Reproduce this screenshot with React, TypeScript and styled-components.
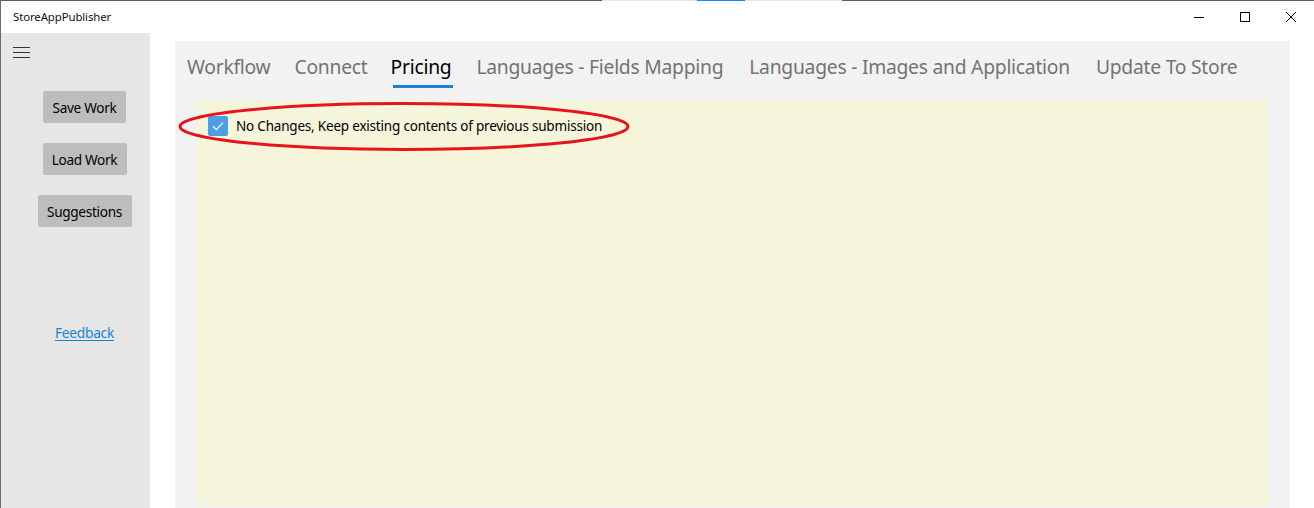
import React from "react";
import styled, { createGlobalStyle } from "styled-components";

const Global = createGlobalStyle`
  html, body { margin: 0; padding: 0; background: #ffffff; }
  body { width: 1314px; height: 508px; overflow: hidden; font-family: "Noto Sans", "Open Sans", sans-serif; }
  * { box-sizing: border-box; }
`;

const Window = styled.div`
  width: 1314px;
  height: 508px;
  display: flex;
  flex-direction: column;
  border-left: 1px solid #6b6b6b;
  background: #ffffff;
  position: relative;
`;

const TopEdge = styled.div`
  height: 1px;
  display: flex;
  background: #5e5e5e;
`;

const EdgeSeg = styled.div<{ $w: number; $c: string }>`
  width: ${(p) => p.$w}px;
  background: ${(p) => p.$c};
`;

const TitleBar = styled.div`
  height: 32px;
  display: flex;
  align-items: center;
  padding-left: 12px;
  background: #ffffff;
`;

const TitleText = styled.div`
  font-family: "Noto Sans", sans-serif;
  font-size: 11.4px;
  letter-spacing: -0.1px;
  color: #111;
  flex: 1;
  padding-bottom: 1px;
`;

const Controls = styled.div`
  display: flex;
  height: 32px;
`;

const ControlButton = styled.div`
  width: 46px;
  height: 32px;
  display: flex;
  align-items: center;
  justify-content: center;
`;

const Body = styled.div`
  flex: 1;
  display: flex;
  min-height: 0;
`;

const Sidebar = styled.div`
  width: 149px;
  background: #e6e6e6;
  display: flex;
  flex-direction: column;
  padding-top: 14px;
`;

const Hamburger = styled.div`
  margin-left: 12px;
  width: 17px;
  height: 11px;
  display: flex;
  flex-direction: column;
  justify-content: space-between;
  span {
    display: block;
    height: 1px;
    background: #333;
  }
`;

const SideButtons = styled.div`
  display: flex;
  flex-direction: column;
  align-items: center;
  gap: 20px;
  padding-left: 18px;
  margin-top: 33px;
`;

const SideButton = styled.button<{ $w: number }>`
  width: ${(p) => p.$w}px;
  height: 32px;
  border: none;
  border-radius: 2px;
  background: #bdbdbd;
  color: #000;
  font-family: "Noto Sans", sans-serif;
  font-size: 13.6px;
  padding: 0;
  display: flex;
  align-items: center;
  justify-content: center;
  letter-spacing: -0.3px;
`;

const FeedbackLink = styled.a`
  align-self: center;
  margin-left: 18px;
  margin-top: 96px;
  font-family: "Noto Sans", sans-serif;
  font-size: 13.8px;
  color: #1a83d8;
  text-decoration: underline;
  text-underline-offset: 2px;
  letter-spacing: -0.3px;
`;

const Main = styled.div`
  flex: 1;
  padding: 8px 24px 0 25px;
  display: flex;
  min-width: 0;
`;

const Panel = styled.div`
  flex: 1;
  background: #f2f2f2;
  display: flex;
  flex-direction: column;
  padding: 0 22px 2px 22px;
`;

const TabBar = styled.div`
  height: 59px;
  display: flex;
  align-items: flex-start;
  padding-top: 12px;
  margin-left: -10px;
`;

const Tab = styled.div<{ $active?: boolean; $gap: number }>`
  position: relative;
  margin-right: ${(p) => p.$gap}px;
  font-family: "Noto Sans", sans-serif;
  font-size: 19.3px;
  line-height: 27px;
  letter-spacing: -0.25px;
  color: ${(p) => (p.$active ? "#000" : "#737373")};
  white-space: nowrap;
  padding-bottom: 8px;
  ${(p) =>
    p.$active
      ? `&::after {
    content: "";
    position: absolute;
    left: 2px;
    right: -2px;
    bottom: 0;
    height: 3px;
    background: #1a7fd6;
  }`
      : ""}
`;

const Content = styled.div`
  flex: 1;
  background: #f5f5dc;
  position: relative;
  padding: 16px 11px;
`;

const CheckRow = styled.label`
  display: flex;
  align-items: center;
  gap: 8px;
  height: 20px;
`;

const CheckBox = styled.span`
  width: 20px;
  height: 20px;
  border-radius: 2px;
  background: #4a9fe6;
  display: flex;
  align-items: center;
  justify-content: center;
`;

const CheckLabel = styled.span`
  font-family: "Noto Sans", sans-serif;
  font-size: 13.5px;
  color: #000;
  letter-spacing: -0.2px;
  margin-top: -1px;
`;

const Annotation = styled.svg`
  position: absolute;
  left: -19px;
  top: 2px;
  width: 452px;
  height: 50px;
  overflow: visible;
  pointer-events: none;
`;

const tabs = [
  { label: "Workflow", gap: 24 },
  { label: "Connect", gap: 23 },
  { label: "Pricing", gap: 25, active: true },
  { label: "Languages - Fields Mapping", gap: 26 },
  { label: "Languages - Images and Application", gap: 26 },
  { label: "Update To Store", gap: 0 },
];

export default function App() {
  return (
    <>
      <Global />
      <Window>
        <TopEdge>
          <EdgeSeg $w={550} $c="#5e5e5e" />
          <EdgeSeg $w={51} $c="#5e5e5e" />
          <EdgeSeg $w={96} $c="#e6e6e6" />
          <EdgeSeg $w={48} $c="#1e88e5" />
          <EdgeSeg $w={97} $c="#e6e6e6" />
          <EdgeSeg $w={472} $c="#5e5e5e" />
        </TopEdge>
        <TitleBar>
          <TitleText>StoreAppPublisher</TitleText>
          <Controls>
            <ControlButton>
              <svg width="12" height="12" viewBox="0 0 12 12">
                <line x1="1" y1="6.5" x2="11" y2="6.5" stroke="#000" strokeWidth="1" />
              </svg>
            </ControlButton>
            <ControlButton>
              <svg width="12" height="12" viewBox="0 0 12 12">
                <rect x="1.5" y="1.5" width="9" height="9" fill="none" stroke="#000" strokeWidth="1" />
              </svg>
            </ControlButton>
            <ControlButton>
              <svg width="12" height="12" viewBox="0 0 12 12">
                <path d="M1 1 L11 11 M11 1 L1 11" stroke="#000" strokeWidth="1" fill="none" />
              </svg>
            </ControlButton>
          </Controls>
        </TitleBar>
        <Body>
          <Sidebar>
            <Hamburger>
              <span />
              <span />
              <span />
            </Hamburger>
            <SideButtons>
              <SideButton $w={83}>Save Work</SideButton>
              <SideButton $w={84}>Load Work</SideButton>
              <SideButton $w={94}>Suggestions</SideButton>
            </SideButtons>
            <FeedbackLink href="#">Feedback</FeedbackLink>
          </Sidebar>
          <Main>
            <Panel>
              <TabBar>
                {tabs.map((t) => (
                  <Tab key={t.label} $active={t.active} $gap={t.gap}>
                    {t.label}
                  </Tab>
                ))}
              </TabBar>
              <Content>
                <Annotation viewBox="0 0 452 50">
                  <ellipse cx="226" cy="24.5" rx="224" ry="23" fill="none" stroke="#e8141b" strokeWidth="3" />
                </Annotation>
                <CheckRow>
                  <CheckBox>
                    <svg width="14" height="14" viewBox="0 0 14 14">
                      <path d="M2 7.2 L5.4 10.6 L12 3.6" fill="none" stroke="#fff" strokeWidth="1.3" />
                    </svg>
                  </CheckBox>
                  <CheckLabel>No Changes, Keep existing contents of previous submission</CheckLabel>
                </CheckRow>
              </Content>
            </Panel>
          </Main>
        </Body>
      </Window>
    </>
  );
}
